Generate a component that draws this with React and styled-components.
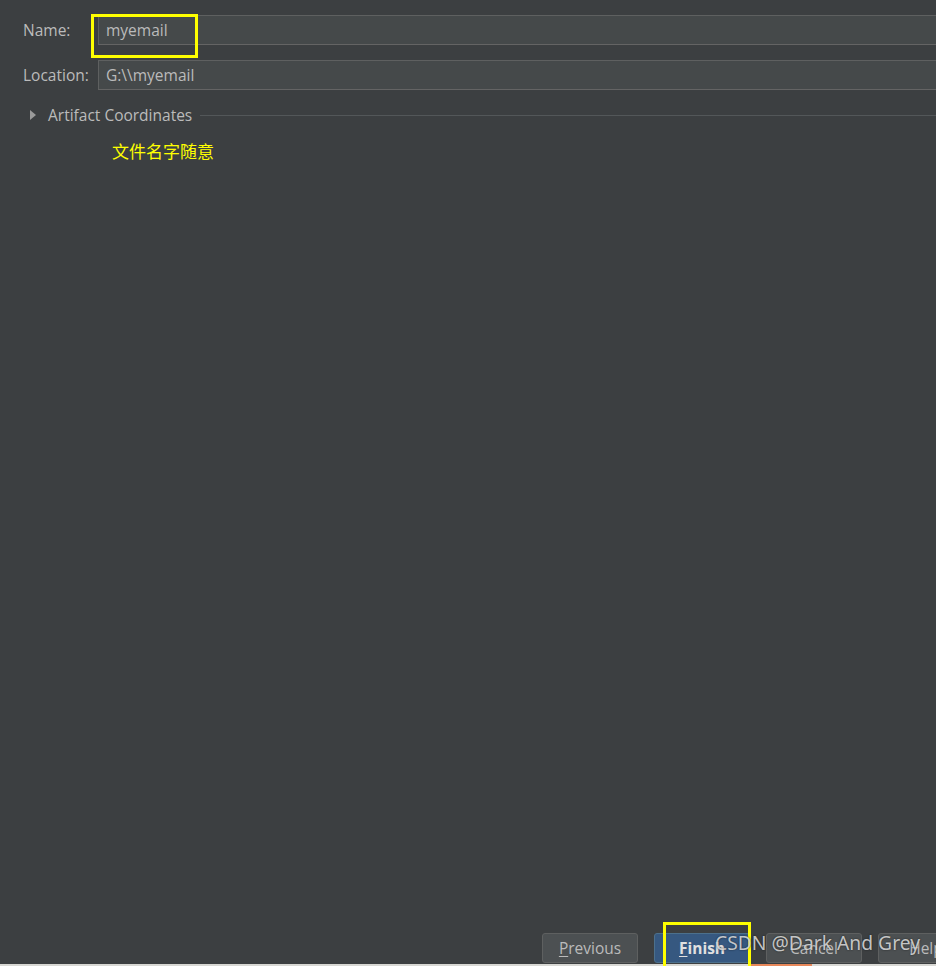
import React from "react";
import styled, { createGlobalStyle } from "styled-components";

const Global = createGlobalStyle`
  html, body { margin: 0; padding: 0; background: #3c3f41; }
  body { font-family: "Open Sans", "Noto Sans", sans-serif; }
`;

const Page = styled.div`
  position: relative;
  width: 936px;
  height: 966px;
  background: #3c3f41;
  overflow: hidden;
  display: flex;
  flex-direction: column;
`;

const Form = styled.div`
  display: grid;
  grid-template-columns: 75px 1fr;
  row-gap: 15px;
  padding: 15px 0 0 23px;
  align-items: center;
`;

const Label = styled.label`
  font-size: 15.5px;
  color: #bbbbbb;
`;

const Field = styled.div`
  height: 28px;
  background: #45494a;
  border: 1px solid #5e6060;
  border-right: none;
  border-bottom-color: #646464;
  display: flex;
  align-items: center;
  padding-left: 7px;
  font-size: 15.5px;
  color: #bbbbbb;
`;

const Section = styled.div`
  display: flex;
  align-items: center;
  margin: 15px 0 0 30px;
  height: 20px;
`;

const Triangle = styled.span`
  width: 0;
  height: 0;
  border-top: 5px solid transparent;
  border-bottom: 5px solid transparent;
  border-left: 6px solid #9a9a9a;
  margin-right: 12px;
`;

const SectionTitle = styled.span`
  font-size: 15.5px;
  color: #bbbbbb;
  margin-right: 8px;
`;

const Rule = styled.div`
  flex: 1;
  height: 1px;
  background: #535759;
`;

const Note = styled.div`
  margin: 16px 0 0 112px;
  font-family: "Noto Sans CJK SC", sans-serif;
  font-size: 17px;
  line-height: 20px;
  color: #ffff00;
`;

const Spacer = styled.div`
  flex: 1;
`;

const Footer = styled.div`
  display: flex;
  gap: 16px;
  padding-left: 542px;
  height: 30px;
  margin-bottom: 1px;
`;

const Button = styled.button`
  flex: none;
  width: 96px;
  height: 30px;
  border-radius: 3px;
  border: 1px solid ${(p) => (p.$primary ? "#4c708c" : "#5e6060")};
  background: ${(p) => (p.$primary ? "#365880" : "#4c5052")};
  color: ${(p) => (p.$primary ? "#e0e0e0" : "#bbbbbb")};
  font-family: "Open Sans", sans-serif;
  font-size: 15.5px;
  font-weight: ${(p) => (p.$primary ? 700 : 400)};
  padding: 0;
  u { text-decoration: underline; text-underline-offset: 2px; }
`;

const Strip = styled.div`
  height: 2px;
  background: linear-gradient(
    to right,
    #d8d8d4 0,
    #d8d8d4 751px,
    #e8885a 751px,
    #e8885a 812px,
    #d8d8d4 812px
  );
`;

const Highlight = styled.div`
  position: absolute;
  border: 3px solid #ffff00;
  box-sizing: border-box;
  pointer-events: none;
`;

const Watermark = styled.div`
  position: absolute;
  left: 715px;
  top: 929px;
  font-family: "Noto Sans", sans-serif;
  font-size: 19.3px;
  color: rgba(225, 225, 225, 0.85);
  text-shadow: 0 0 2px rgba(0, 0, 0, 0.6);
  white-space: nowrap;
`;

export default function App() {
  return (
    <>
      <Global />
      <Page>
        <Form>
          <Label>Name:</Label>
          <Field>myemail</Field>
          <Label>Location:</Label>
          <Field>G:\\myemail</Field>
        </Form>
        <Section>
          <Triangle />
          <SectionTitle>Artifact Coordinates</SectionTitle>
          <Rule />
        </Section>
        <Note>文件名字随意</Note>
        <Spacer />
        <Footer>
          <Button>
            <u>P</u>revious
          </Button>
          <Button $primary>
            <u>F</u>inish
          </Button>
          <Button>Cancel</Button>
          <Button>Help</Button>
        </Footer>
        <Strip />
        <Highlight style={{ left: 91, top: 14, width: 107, height: 44 }} />
        <Highlight style={{ left: 663, top: 922, width: 88, height: 48 }} />
        <Watermark>CSDN @Dark And Grey</Watermark>
      </Page>
    </>
  );
}
